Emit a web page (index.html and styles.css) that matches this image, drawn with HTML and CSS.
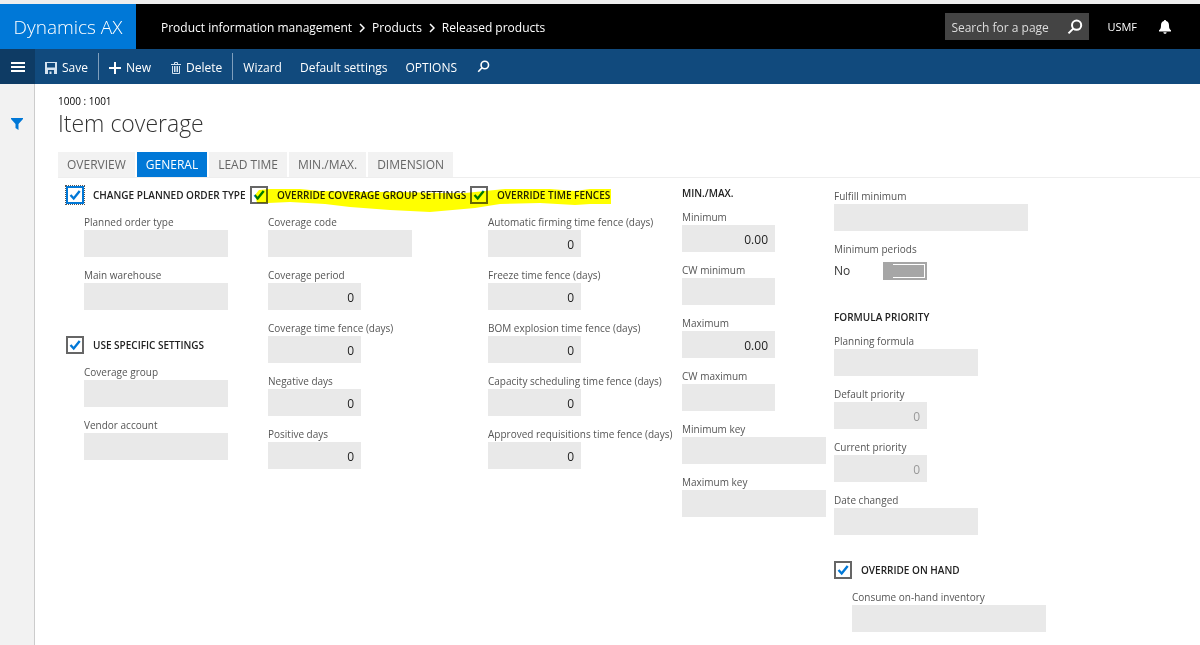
FILE: index.html
```html
<!DOCTYPE html>
<html lang="en">
<head>
    <meta charset="UTF-8">
    <meta name="viewport" content="width=device-width, initial-scale=1.0">
    <title>Item coverage - Dynamics AX</title>
    <link rel="stylesheet" href="styles.css">
</head>
<body>
    <header class="topbar">
        <a class="brand" href="#">Dynamics AX</a>
        <nav class="breadcrumb" aria-label="Breadcrumb">
            <a href="#">Product information management</a>
            <svg class="chevron" viewBox="0 0 6 10"><path d="M1 1l4 4-4 4"/></svg>
            <a href="#">Products</a>
            <svg class="chevron" viewBox="0 0 6 10"><path d="M1 1l4 4-4 4"/></svg>
            <a href="#">Released products</a>
        </nav>
        <div class="search">
            <input type="text" placeholder="Search for a page" aria-label="Search for a page">
            <svg class="search-icon" viewBox="0 0 16 16"><circle cx="9.6" cy="6.2" r="4.6"/><path d="M6.2 9.6L1.5 14.4"/></svg>
        </div>
        <button class="company" type="button">USMF</button>
        <button class="bell" type="button" aria-label="Notifications">
            <svg viewBox="0 0 12 14"><path d="M6 0c.7 0 1.1.5 1.1 1.1C9 1.6 10 3.2 10 5.2c0 3 .6 4 2 5v1.3H0v-1.3c1.4-1 2-2 2-5 0-2 1-3.600 2.900-4.100C4.900.5 5.300 0 6 0zM4.400 12.200h3.200c0 2.100-3.200 2.100-3.200 0z"/></svg>
        </button>
    </header>

    <div class="actionbar">
        <button class="menu" type="button" aria-label="Menu">
            <svg viewBox="0 0 14 10"><path d="M0 1h14M0 5h14M0 9h14"/></svg>
        </button>
        <div class="action-group">
            <button class="action" type="button">
                <svg class="icon" viewBox="0 0 12 12"><path fill-rule="evenodd" d="M0 0h12v12H0zM2 1v4.500h8V1zM3 8v4h1.500V9.500h2V12H9V8z"/></svg>
                Save
            </button>
        </div>
        <div class="action-group">
            <button class="action" type="button">
                <svg class="icon plus" viewBox="0 0 12 12"><path d="M6 0v12M0 6h12"/></svg>
                New
            </button>
            <button class="action delete" type="button">
                <svg class="icon trash" viewBox="0 0 10 12"><path d="M0 2.500h10M3.500 2V.5h3V2M1.500 4v7.500h7V4M3.500 4v6M5 4v6M6.500 4v6"/></svg>
                Delete
            </button>
        </div>
        <div class="action-group">
            <button class="action" type="button">Wizard</button>
            <button class="action" type="button">Default settings</button>
            <button class="action" type="button">OPTIONS</button>
            <button class="action find" type="button" aria-label="Find action">
                <svg class="icon search-icon" viewBox="0 0 16 16"><circle cx="9.6" cy="6.2" r="4.6"/><path d="M6.2 9.6L1.5 14.4"/></svg>
            </button>
        </div>
    </div>

    <div class="workspace">
        <aside class="rail">
            <button class="filter" type="button" aria-label="Filter">
                <svg viewBox="0 0 12 12"><path d="M0 0h12v1L7.500 6v6l-3-2V6L0 1z"/></svg>
            </button>
        </aside>

        <main class="page">
            <p class="record">1000 : 1001</p>
            <h1>Item coverage</h1>

            <nav class="tabs" aria-label="Sections">
                <a href="#">OVERVIEW</a>
                <a class="active" href="#">GENERAL</a>
                <a href="#">LEAD TIME</a>
                <a href="#">MIN./MAX.</a>
                <a href="#">DIMENSION</a>
            </nav>

            <form class="columns">
                <div class="column">
                    <section class="group">
                        <label class="check focused"><input type="checkbox" checked>CHANGE PLANNED ORDER TYPE</label>
                        <div class="fields indented">
                            <label class="field">Planned order type<input type="text"></label>
                            <label class="field">Main warehouse<input type="text"></label>
                        </div>
                    </section>
                    <section class="group">
                        <label class="check"><input type="checkbox" checked>USE SPECIFIC SETTINGS</label>
                        <div class="fields indented">
                            <label class="field">Coverage group<input type="text"></label>
                            <label class="field">Vendor account<input type="text"></label>
                        </div>
                    </section>
                </div>

                <div class="column marked">
                    <section class="group">
                        <label class="check"><input type="checkbox" checked>OVERRIDE COVERAGE GROUP SETTINGS</label>
                        <div class="fields indented">
                            <label class="field">Coverage code<input type="text"></label>
                            <label class="field number">Coverage period<input type="text" value="0"></label>
                            <label class="field number">Coverage time fence (days)<input type="text" value="0"></label>
                            <label class="field number">Negative days<input type="text" value="0"></label>
                            <label class="field number">Positive days<input type="text" value="0"></label>
                        </div>
                    </section>
                    <!-- highlighter stroke across both override headings -->
                    <svg class="marker" viewBox="0 0 362 28"><path d="M5 10L9 5 20 4 50 4 70 6 110 7 150 7 190 8 215 8 235 6 255 4 300 4 325 6 340 4 361 4V19L340 19 325 20 290 18 250 19 225 23 180 27 140 25 100 22 75 19 40 17 18 18 7 18z"/></svg>
                </div>

                <div class="column">
                    <section class="group">
                        <label class="check"><input type="checkbox" checked>OVERRIDE TIME FENCES</label>
                        <div class="fields indented">
                            <label class="field number">Automatic firming time fence (days)<input type="text" value="0"></label>
                            <label class="field number">Freeze time fence (days)<input type="text" value="0"></label>
                            <label class="field number">BOM explosion time fence (days)<input type="text" value="0"></label>
                            <label class="field number">Capacity scheduling time fence (days)<input type="text" value="0"></label>
                            <label class="field number">Approved requisitions time fence (days)<input type="text" value="0"></label>
                        </div>
                    </section>
                </div>

                <div class="column">
                    <section class="group">
                        <h2>MIN./MAX.</h2>
                        <div class="fields">
                            <label class="field number">Minimum<input type="text" value="0.00"></label>
                            <label class="field number">CW minimum<input type="text"></label>
                            <label class="field number">Maximum<input type="text" value="0.00"></label>
                            <label class="field number">CW maximum<input type="text"></label>
                            <label class="field">Minimum key<input type="text"></label>
                            <label class="field">Maximum key<input type="text"></label>
                        </div>
                    </section>
                </div>

                <div class="column last">
                    <section class="fields">
                        <label class="field wide">Fulfill minimum<input type="text"></label>
                        <div class="field">
                            <label for="min-periods">Minimum periods</label>
                            <div class="toggle-row">
                                <span>No</span>
                                <input class="toggle" id="min-periods" type="checkbox" role="switch">
                            </div>
                        </div>
                    </section>
                    <section class="group">
                        <h2>FORMULA PRIORITY</h2>
                        <div class="fields">
                            <label class="field">Planning formula<input type="text"></label>
                            <label class="field number">Default priority<input type="text" value="0" disabled></label>
                            <label class="field number">Current priority<input type="text" value="0" disabled></label>
                            <label class="field">Date changed<input type="text"></label>
                        </div>
                    </section>
                    <section class="group">
                        <label class="check"><input type="checkbox" checked>OVERRIDE ON HAND</label>
                        <div class="fields indented">
                            <label class="field wide">Consume on-hand inventory<input type="text"></label>
                        </div>
                    </section>
                </div>
            </form>
        </main>
    </div>
</body>
</html>
```
FILE: styles.css
```css
* {
    box-sizing: border-box;
}
body {
    margin: 0;
    min-height: 100vh;
    display: flex;
    flex-direction: column;
    border-top: 4px solid #eeeeee;
    background: white;
    color: #222;
    font-family: "Open Sans", "Noto Sans", sans-serif;
    font-size: 10px;
    line-height: 16px;
}
a {
    color: inherit;
    text-decoration: none;
}
button {
    padding: 0;
    border: none;
    background: none;
    color: inherit;
    font: inherit;
    cursor: pointer;
}
input {
    font: inherit;
}
svg {
    display: block;
}

/* top bar */
.topbar {
    display: flex;
    align-items: center;
    height: 45px;
    background: black;
    color: white;
    font-size: 12px;
}
.brand {
    width: 136px;
    height: 100%;
    background: #0078d7;
    font-size: 19px;
    font-weight: 300;
    line-height: 46px;
    text-align: center;
}
.breadcrumb {
    display: flex;
    align-items: center;
    gap: 7px;
    margin-left: 25px;
    padding-top: 2px;
}
.chevron {
    width: 6px;
    height: 10px;
    fill: none;
    stroke: white;
    stroke-width: 1.5;
}
.search {
    display: flex;
    align-items: center;
    width: 144px;
    height: 27px;
    margin-left: auto;
    padding: 0 6px;
    background: #444;
}
.search input {
    flex: 1;
    min-width: 0;
    padding: 2px 0 0;
    border: none;
    background: none;
    color: white;
}
.search input::placeholder {
    color: #ddd;
    opacity: 1;
}
.search-icon {
    width: 16px;
    height: 16px;
    fill: none;
    stroke: white;
    stroke-width: 2;
}
.company {
    margin-left: 18px;
    font-size: 11px;
}
.bell {
    margin: 0 29px 0 22px;
}
.bell svg {
    width: 12px;
    height: 14px;
    fill: white;
}

/* action bar */
.actionbar {
    display: flex;
    align-items: center;
    height: 35px;
    background: #114a7d;
    color: white;
    font-size: 12px;
}
.menu {
    display: flex;
    align-items: center;
    justify-content: center;
    width: 35px;
    height: 100%;
    background: #0e3b64;
}
.menu svg {
    width: 14px;
    height: 10px;
    stroke: white;
    stroke-width: 2;
}
.action-group {
    display: flex;
    align-items: center;
    gap: 18px;
    height: 27px;
    padding: 0 10px;
}
.action-group + .action-group {
    border-left: 1px solid #7f9fbd;
}
.action {
    display: flex;
    align-items: center;
    gap: 5px;
    padding-top: 2px;
}
.delete {
    margin-left: 2px;
}
.find {
    padding: 0 0 0 2px;
}
.icon {
    width: 12px;
    height: 12px;
    fill: #d5e3f0;
}
.plus {
    stroke: white;
    stroke-width: 2;
}
.trash {
    width: 10px;
    fill: none;
    stroke: #d5e3f0;
}
.action .search-icon {
    width: 13px;
    height: 13px;
    fill: none;
}

/* page body */
.workspace {
    flex: 1;
    display: flex;
}
.rail {
    width: 35px;
    padding: 34px 0 0 11px;
    border-right: 1px solid #ccc;
    background: #f2f2f2;
}
.filter svg {
    width: 12px;
    height: 12px;
    fill: #0078d7;
}
.page {
    flex: 1;
    padding: 9px 0 12px 23px;
}
.record {
    margin: 0;
    color: black;
}
h1 {
    margin: 0;
    color: #333;
    font-size: 23px;
    font-weight: 300;
    line-height: 28px;
}
.tabs {
    display: flex;
    gap: 2px;
    margin-top: 15px;
    border-bottom: 1px solid #eee;
    font-size: 12px;
}
.tabs a {
    padding: 5px 9px 4px;
    background: #f2f2f2;
    color: #666;
}
.tabs .active {
    background: #0078d7;
    color: white;
}

/* form */
.columns {
    display: grid;
    grid-template-columns: 184px 220px 212px 152px 1fr;
    padding: 7px 0 0 8px;
}
.column {
    white-space: nowrap;
}
.last {
    padding-top: 3px;
}
.group + .group,
.fields + .group {
    margin-top: 25px;
}
h2,
.check {
    color: #222;
    font-size: 10px;
    font-weight: 600;
}
h2 {
    margin: 0 0 8px;
    line-height: 16px;
}
.check {
    display: flex;
    align-items: center;
    gap: 9px;
    height: 20px;
    margin-bottom: 9px;
}
.check input {
    appearance: none;
    width: 18px;
    height: 18px;
    margin: 0;
    border: 2px solid #666;
    background: white url("data:image/svg+xml,%3Csvg xmlns='http://www.w3.org/2000/svg' viewBox='0 0 14 14'%3E%3Cpath d='M2.500 7l3.200 3.500 6-7.500' fill='none' stroke='%230078d7' stroke-width='2.400'/%3E%3C/svg%3E") center / 14px 14px no-repeat;
}
.focused input {
    border-color: #0078d7;
    outline: 1px dotted #555;
}
.fields {
    display: flex;
    flex-direction: column;
    gap: 10px;
}
.indented {
    margin-left: 18px;
}
.field {
    color: #555;
}
.field input[type="text"] {
    display: block;
    width: 144px;
    height: 27px;
    padding: 2px 7px 0;
    border: none;
    background: #e9e9e9;
    color: #222;
    font-size: 12px;
}
.field input[type="text"]:disabled {
    color: #999;
}
.number input[type="text"] {
    width: 93px;
    text-align: right;
}
.wide input[type="text"] {
    width: 194px;
}
.toggle-row {
    display: flex;
    align-items: center;
    gap: 33px;
    height: 27px;
    color: #333;
    font-size: 12px;
}
.toggle {
    appearance: none;
    width: 44px;
    height: 18px;
    margin: 0;
    border: 2px solid #a6a6a6;
    border-left-width: 10px;
    background: #a6a6a6;
    box-shadow: inset -1px 0 white, inset 0 1px white, inset 0 -1px white;
}
.marked {
    position: relative;
}
.marker {
    position: absolute;
    top: 0;
    left: 0;
    z-index: 1;
    width: 362px;
    height: 28px;
    fill: #ff0;
    mix-blend-mode: multiply;
    pointer-events: none;
}
```
